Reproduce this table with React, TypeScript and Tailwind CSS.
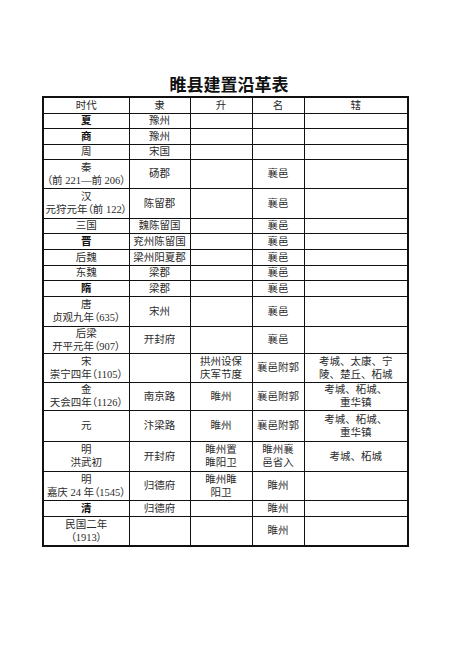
import React from "react";

type Row = { h: string; c: React.ReactNode[]; bold?: boolean };

const br = (a: string, b: string) => (
  <>
    {a}
    <br />
    {b}
  </>
);

const rows: Row[] = [
  { h: "h-[15.5px]", c: ["夏", "豫州", "", "", ""], bold: true },
  { h: "h-[15.5px]", c: ["商", "豫州", "", "", ""], bold: true },
  { h: "h-[15.5px]", c: ["周", "宋国", "", "", ""] },
  { h: "h-[28.5px]", c: [br("秦", "（前 221—前 206）"), "砀郡", "", "襄邑", ""] },
  { h: "h-[30px]", c: [br("汉", "元狩元年（前 122）"), "陈留郡", "", "襄邑", ""] },
  { h: "h-[15.5px]", c: ["三国", "魏陈留国", "", "襄邑", ""] },
  { h: "h-[15.5px]", c: ["晋", "兖州陈留国", "", "襄邑", ""], bold: true },
  { h: "h-[16px]", c: ["后魏", "梁州阳夏郡", "", "襄邑", ""] },
  { h: "h-[15.5px]", c: ["东魏", "梁郡", "", "襄邑", ""] },
  { h: "h-[15.5px]", c: ["隋", "梁郡", "", "襄邑", ""], bold: true },
  { h: "h-[30px]", c: [br("唐", "贞观九年（635）"), "宋州", "", "襄邑", ""] },
  { h: "h-[27.5px]", c: [br("后梁", "开平元年（907）"), "开封府", "", "襄邑", ""] },
  {
    h: "h-[28.5px]",
    c: [br("宋", "崇宁四年（1105）"), "", br("拱州设保", "庆军节度"), "襄邑附郭", br("考城、太康、宁", "陵、楚丘、柘城")],
  },
  {
    h: "h-[28px]",
    c: [br("金", "天会四年（1126）"), "南京路", "睢州", "襄邑附郭", br("考城、柘城、", "重华镇")],
  },
  { h: "h-[31.5px]", c: ["元", "汴梁路", "睢州", "襄邑附郭", br("考城、柘城、", "重华镇")] },
  {
    h: "h-[29.5px]",
    c: [br("明", "洪武初"), "开封府", br("睢州置", "睢阳卫"), br("睢州襄", "邑省入"), "考城、柘城"],
  },
  {
    h: "h-[29px]",
    c: [br("明", "嘉庆 24 年（1545）"), "归德府", br("睢州睢", "阳卫"), "睢州", ""],
  },
  { h: "h-[16px]", c: ["清", "归德府", "", "睢州", ""], bold: true },
  { h: "h-[30px]", c: [br("民国二年", "（1913）"), "", "", "睢州", ""] },
];

const widths = ["w-[86px]", "w-[61px]", "w-[62px]", "w-[52px]", "w-[104px]"];
const headers = ["时代", "隶", "升", "名", "辖"];

export default function App() {
  return (
    <div
      className="w-[450px] h-[661px] bg-white text-[#2b2b2b]"
      style={{ fontFamily: '"Liberation Serif", "Noto Sans CJK SC", serif' }}
    >
      <div className="pt-[74px] pl-[8px] text-center text-[17px] leading-[20px] font-bold text-[#111] [font-family:'Noto_Sans_CJK_SC',sans-serif]">
        睢县建置沿革表
      </div>
      <table className="mt-[2px] ml-[42px] w-[365px] table-fixed border-collapse border-2 border-[#111] text-[10.5px] leading-[13px]">
        <colgroup>
          {widths.map((w, i) => (
            <col key={i} className={w} />
          ))}
        </colgroup>
        <tbody>
          <tr className="h-[16px]">
            {headers.map((t, i) => (
              <td key={i} className="border-[1.5px] border-[#111] p-0 text-center align-middle">
                {t}
              </td>
            ))}
          </tr>
          {rows.map((r, ri) => (
            <tr key={ri} className={r.h}>
              {r.c.map((cell, ci) => (
                <td
                  key={ci}
                  className={
                    "border-[1.5px] border-[#111] p-0 text-center align-middle whitespace-nowrap" +
                    (ci === 0 ? " [font-feature-settings:'palt']" : "") +
                    (ci === 0 && r.bold ? " font-bold text-[#111]" : "")
                  }
                >
                  {cell}
                </td>
              ))}
            </tr>
          ))}
        </tbody>
      </table>
    </div>
  );
}
